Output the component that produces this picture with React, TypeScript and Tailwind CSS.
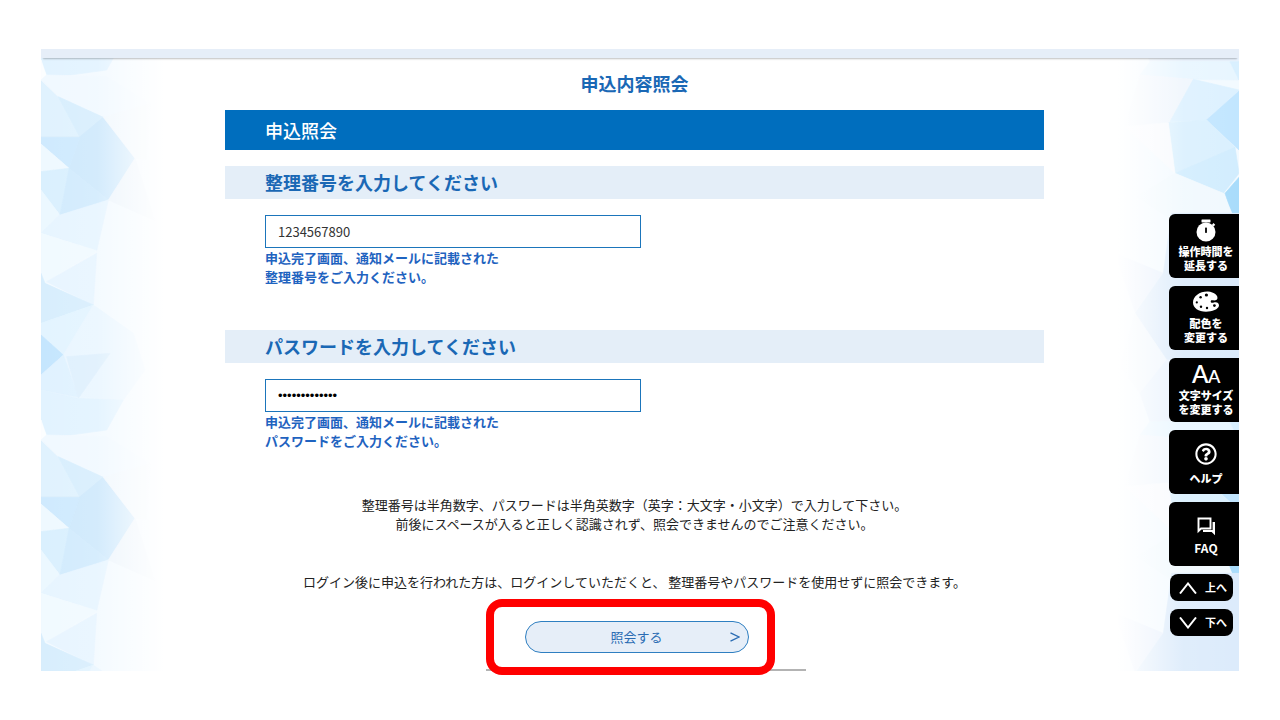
import type { ReactNode } from "react";
import { FaRegQuestionCircle } from "react-icons/fa";

type Facet = [points: string, fill: string];

const TILE = 1080;

const leftFacets: Facet[] = [
  ["33,120 85,170 220,232 150,292 33,292", "#e0f2fe"],
  ["33,120 50,105 230,110 360,190 220,232 85,170", "#f1f9ff"],
  ["85,170 220,232 150,292", "#d8eefd"],
  ["220,232 315,355 235,480 117,385 150,290", "#cfe9fc"],
  ["33,292 150,292 117,385 33,312", "#cfeafe"],
  ["33,312 117,385 33,395", "#eff9ff"],
  ["33,395 117,385 90,525 33,450", "#daf0fe"],
  ["33,450 90,525 33,580", "#ecf8ff"],
  ["117,385 235,480 90,525", "#d2ebfd"],
  ["235,480 90,525 33,580 200,632", "#e7f5ff"],
  ["235,480 375,542 315,355", "#edf5fc"],
  ["220,232 362,190 350,360 315,355", "#f1f8fd"],
  ["33,580 200,632 50,725 33,700", "#f1faff"],
  ["50,725 200,640 190,795", "#e8f5ff"],
  ["33,700 45,730 190,795 33,850", "#d8eefd"],
  ["33,850 190,795 150,910 100,945 33,885", "#e3f4ff"],
  ["33,885 100,945 33,1005", "#c5e6fe"],
  ["190,795 310,880 345,990 280,1080 145,1072 100,945", "#eaf6ff"],
  ["33,1005 100,945 145,1072 33,1050", "#e0f2ff"],
  ["110,950 240,940 145,1075", "#dff0fd"],
  ["33,1050 145,1075 280,1080 230,1170 50,1195 33,1140", "#e2f3ff"],
  ["33,1140 52,1195 33,1197", "#fcfeff"],
];

const rightFacets: Facet[] = [
  ["120,105 150,65 390,65 417,120 280,118", "#e8f6ff"],
  ["390,65 417,65 417,120", "#d9f0ff"],
  ["120,105 280,118 210,250 75,260", "#f0f6fd"],
  ["280,118 417,150 320,240 210,245", "#ddf1ff"],
  ["417,153 320,240 417,330", "#c2e6ff"],
  ["320,240 405,322 225,400 205,248", "#daf0fe"],
  ["225,400 405,322 417,400 370,460", "#d2edfe"],
  ["417,412 375,460 395,520 417,520", "#a9dcfb"],
  ["225,400 370,460 400,530 200,530 110,470", "#f1f9fe"],
  ["75,260 205,248 225,400", "#f8fafe"],
  ["45,640 190,700 105,815", "#e9f1fd"],
  ["190,700 215,520 417,520 417,960 200,960 105,820", "#dcebfb"],
  ["105,820 200,960 210,1000 120,1060 60,980", "#eff6fd"],
  ["200,960 417,960 417,1145 150,1145 120,1060", "#e8f2fd"],
];

function Facets({ facets, side }: { facets: Facet[]; side: "left" | "right" }) {
  const left = side === "left";
  const id = `fade-${side}`;
  return (
    <svg
      className={left ? "absolute left-0 top-0 h-[613px] w-[140px]" : "absolute right-0 top-0 h-[613px] w-[139px]"}
      viewBox={left ? "33 54 420 1839" : "0 54 417 1839"}
      preserveAspectRatio="none"
      aria-hidden="true"
    >
      <defs>
        <linearGradient id={id} x1={left ? "0" : "1"} x2={left ? "1" : "0"} y1="0" y2="0">
          <stop offset="0" stopColor="#fff" stopOpacity="0" />
          <stop offset="0.4" stopColor="#fff" stopOpacity="0.1" />
          <stop offset="0.88" stopColor="#fff" stopOpacity="1" />
        </linearGradient>
      </defs>
      <rect x="0" y="54" width="453" height="1839" fill="#f3faff" />
      {[-TILE, 0, TILE].map((dy) => (
        <g key={dy} transform={`translate(0 ${dy})`} strokeWidth="2">
          {facets.map(([points, fill]) => (
            <polygon key={points} points={points} fill={fill} stroke={fill} />
          ))}
        </g>
      ))}
      <rect x={left ? 33 : 0} y="54" width={left ? 420 : 417} height="1839" fill={`url(#${id})`} />
    </svg>
  );
}

function StopwatchIcon() {
  return (
    <svg className="h-6 w-6" viewBox="0 0 24 24" fill="#fff" aria-hidden="true">
      <rect x="7.5" y="1.500" width="9" height="3" rx="0.4" />
      <circle cx="12" cy="14" r="9.500" />
      <path d="M18 6.800l1.400-1.700 1.800 1.600-1.500 1.700z" />
      <rect x="11.100" y="9.500" width="1.8" height="5.4" rx="0.6" fill="#000" />
    </svg>
  );
}

function PaletteIcon() {
  return (
    <svg className="h-6 w-7" viewBox="0 0 28 24" aria-hidden="true">
      <path
        fill="#fff"
        d="M16 1.5C8 1.2 1 6 1 12.500C1 18 6.500 21.800 14 21.800C20 21.800 26.600 19.500 27 15.600C27.200 12.600 24 11.600 21.800 12.600C19.800 13.400 18.300 12.300 18.800 10.900C19.400 9.400 22.500 11.500 25 9.600C27.200 6 22 1.800 16 1.500Z"
      />
      <g fill="#000">
        <circle cx="14.400" cy="5" r="1.600" />
        <circle cx="8.600" cy="7.200" r="1.200" />
        <circle cx="4.800" cy="12.400" r="1.100" />
        <circle cx="9" cy="16.800" r="1.200" />
        <circle cx="15" cy="18" r="1.200" />
        <circle cx="22.400" cy="15.600" r="1.400" />
      </g>
    </svg>
  );
}

function ChatIcon() {
  return (
    <svg className="mt-1 mb-0.5 h-[22px] w-[22px]" viewBox="0 0 22 22" aria-hidden="true">
      <path d="M3.500 3.500H15.500V13.500H6L3.500 16Z" fill="none" stroke="#fff" strokeWidth="1.900" />
      <path d="M17.600 7H20V20.200L16.700 17H8V14.900H17.600Z" fill="#fff" />
    </svg>
  );
}

function SideButton({ icon, children }: { icon: ReactNode; children: ReactNode }) {
  return (
    <button
      type="button"
      className="flex h-16 w-[70px] flex-col items-center justify-center gap-0.5 rounded-l-md bg-black pb-0.5 pl-1 text-center text-[11px] leading-[14px] font-black whitespace-nowrap text-white"
    >
      {icon}
      <span className="block">{children}</span>
    </button>
  );
}

function JumpButton({ up, children }: { up?: boolean; children: ReactNode }) {
  return (
    <button
      type="button"
      className="ml-px flex h-[27px] w-[63px] items-center gap-2 rounded-lg bg-black pl-[9px] text-[11px] leading-[14px] font-bold text-white"
    >
      <svg className="h-3 w-[18px]" viewBox="0 0 18 12" fill="none" stroke="#fff" strokeWidth="2" aria-hidden="true">
        <path d={up ? "M1 11.500L9 1.500L17 11.500" : "M1 0.500L9 10.500L17 0.500"} />
      </svg>
      <span className="pb-0.5">{children}</span>
    </button>
  );
}

function Field({
  id,
  label,
  type,
  value,
  children,
}: {
  id: string;
  label: string;
  type: "text" | "password";
  value: string;
  children: ReactNode;
}) {
  return (
    <section className="mt-4">
      <h3 className="bg-[#e4eef8] pl-10 text-lg leading-8 font-bold text-[#1a68b5] pb-px">
        <label htmlFor={id}>{label}</label>
      </h3>
      <div className="pt-4 pl-10">
        <input
          id={id}
          type={type}
          defaultValue={value}
          className={
            type === "password"
              ? "block h-[33px] w-full max-w-[376px] border border-[#1b75bb] bg-white px-3 font-['Liberation_Sans',sans-serif] text-[13px] text-black outline-none"
              : "block h-[33px] w-full max-w-[376px] border border-[#1b75bb] bg-white px-3 text-[13px] text-[#333] outline-none"
          }
        />
        <p className="text-[13px] leading-[19px] font-bold text-[#1f63c0]">{children}</p>
      </div>
    </section>
  );
}

export default function App() {
  return (
    <div
      lang="ja"
      className="min-h-screen bg-white px-[41px] py-[49px] font-['Noto_Sans_CJK_JP',sans-serif] text-[#222]"
    >
      <div className="relative">
        <header className="relative z-10 h-[9px] bg-[#e6eef8] shadow-[0_3px_2px_-2px_rgba(0,0,0,0.25)]" />
        <div className="relative">
          <div className="absolute inset-0 overflow-hidden">
            <Facets facets={leftFacets} side="left" />
            <Facets facets={rightFacets} side="right" />
          </div>

          <main className="relative pr-[11px]">
            <form className="mx-auto max-w-[819px]" onSubmit={(e) => e.preventDefault()}>
              <h1 className="pt-3 pb-3.5 text-center text-lg leading-[26px] font-bold text-[#1a68b5]">申込内容照会</h1>
              <h2 className="bg-[#006ebe] pl-10 text-lg leading-10 font-medium text-white">申込照会</h2>

              <Field id="receipt-number" label="整理番号を入力してください" type="text" value="1234567890">
                申込完了画面、通知メールに記載された
                <br />
                整理番号をご入力ください。
              </Field>
              <div className="h-7" />
              <Field id="password" label="パスワードを入力してください" type="password" value="abcdefghijklm">
                申込完了画面、通知メールに記載された
                <br />
                パスワードをご入力ください。
              </Field>

              <div className="mt-[45px] text-center text-[13px] leading-[19px]">
                <p>
                  整理番号は半角数字、パスワードは半角英数字（英字：大文字・小文字）で入力して下さい。
                  <br />
                  前後にスペースが入ると正しく認識されず、照会できませんのでご注意ください。
                </p>
                <p className="mt-[39px]">
                  ログイン後に申込を行われた方は、ログインしていただくと、 整理番号やパスワードを使用せずに照会できます。
                </p>
              </div>

              <div className="mt-[30px] flex justify-center pl-1">
                <div className="relative">
                  <button
                    type="submit"
                    className="grid h-8 w-56 grid-cols-[1fr_auto_1fr] items-center rounded-full border border-[#2f7fc1] bg-[#e6eef8] pr-2 text-[13px] text-[#2a6cb3]"
                  >
                    <span className="col-start-2 pl-2">照会する</span>
                    <svg
                      className="h-[10px] w-[10px] justify-self-end"
                      viewBox="0 0 10 10"
                      fill="none"
                      stroke="currentColor"
                      strokeWidth="1.300"
                      aria-hidden="true"
                    >
                      <path d="M0.500 0.800L9 5L0.500 9.200" />
                    </svg>
                  </button>
                  <div className="pointer-events-none absolute -top-[22px] -right-[26px] -bottom-[22px] -left-[39px] z-10 rounded-2xl border-8 border-[#ff0000]" />
                </div>
              </div>
              <div className="mt-4 flex justify-center pl-[22px]">
                <hr className="w-80 border-t-2 border-[#b3b3b3]" />
              </div>
            </form>
          </main>
        </div>

        <nav className="absolute top-[165px] right-0 z-20 flex flex-col gap-2">
          <SideButton icon={<StopwatchIcon />}>
            操作時間を
            <br />
            延長する
          </SideButton>
          <SideButton icon={<PaletteIcon />}>
            配色を
            <br />
            変更する
          </SideButton>
          <SideButton
            icon={
              <svg className="h-6 w-7 overflow-visible" viewBox="0 0 28 24" fill="#fff" aria-hidden="true">
                <text x="0" y="21" className="font-['Lato',sans-serif] text-[24px] font-semibold">
                  A
                </text>
                <text x="16" y="21" className="font-['Lato',sans-serif] text-[18px] font-semibold">
                  A
                </text>
              </svg>
            }
          >
            文字サイズ
            <br />
            を変更する
          </SideButton>
          <SideButton icon={<FaRegQuestionCircle className="mt-1.5 mb-1 h-[22px] w-[22px]" aria-hidden="true" />}>
            ヘルプ
          </SideButton>
          <SideButton icon={<ChatIcon />}>
            <span className="text-[12px] font-bold">FAQ</span>
          </SideButton>
          <JumpButton up>上へ</JumpButton>
          <JumpButton>下へ</JumpButton>
        </nav>
      </div>
    </div>
  );
}
